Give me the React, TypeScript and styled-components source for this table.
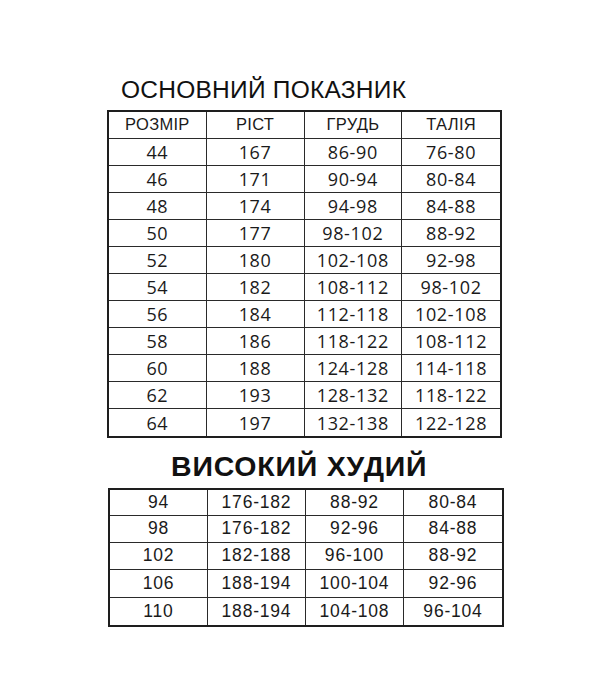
import React from "react";
import styled, { createGlobalStyle } from "styled-components";

const Global = createGlobalStyle`
  html, body { margin: 0; padding: 0; background: #ffffff; }
  body { font-family: "Liberation Sans", Arial, sans-serif; }
`;

const Page = styled.div`
  width: 610px;
  height: 699px;
  box-sizing: border-box;
  padding-top: 78px;
  display: flex;
  flex-direction: column;
  align-items: flex-start;
  background: #fff;
`;

const Title = styled.h1<{ $bold?: boolean; $size: number; $left: number; $top: number; $spacing: number }>`
  margin: ${(p) => p.$top}px 0 0 ${(p) => p.$left}px;
  font-family: "Liberation Sans", Arial, sans-serif;
  font-weight: ${(p) => (p.$bold ? 700 : 400)};
  font-size: ${(p) => p.$size}px;
  line-height: ${(p) => p.$size}px;
  letter-spacing: ${(p) => p.$spacing}px;
  color: #111;
  white-space: nowrap;
`;

const Grid = styled.div<{ $left: number; $top: number; $width: number }>`
  margin: ${(p) => p.$top}px 0 0 ${(p) => p.$left}px;
  width: ${(p) => p.$width}px;
  box-sizing: border-box;
  border: 2px solid #1e1e1e;
  display: grid;
  grid-template-columns: repeat(4, 1fr);
`;

const Cell = styled.div<{ $h: number; $last: boolean; $bottom: boolean; $variant: "head" | "calibri" | "arial" }>`
  height: ${(p) => p.$h}px;
  box-sizing: border-box;
  border-right: ${(p) => (p.$last ? "none" : "1px solid #2a2a2a")};
  border-bottom: ${(p) => (p.$bottom ? "none" : "1px solid #2a2a2a")};
  display: flex;
  align-items: center;
  justify-content: center;
  white-space: nowrap;
  color: #1a1a1a;
  font-family: ${(p) =>
    p.$variant === "calibri" ? '"Open Sans", sans-serif' : '"Liberation Sans", Arial, sans-serif'};
  font-weight: ${(p) => (p.$variant === "calibri" ? 500 : 400)};
  font-size: ${(p) => (p.$variant === "head" ? 16.5 : p.$variant === "calibri" ? 18 : 17.5)}px;
  letter-spacing: ${(p) => (p.$variant === "head" ? 0.3 : p.$variant === "calibri" ? 0.7 : 0.8)}px;
  padding-top: ${(p) => (p.$variant === "calibri" ? 1 : 0)}px;
`;

const main: string[][] = [
  ["44", "167", "86-90", "76-80"],
  ["46", "171", "90-94", "80-84"],
  ["48", "174", "94-98", "84-88"],
  ["50", "177", "98-102", "88-92"],
  ["52", "180", "102-108", "92-98"],
  ["54", "182", "108-112", "98-102"],
  ["56", "184", "112-118", "102-108"],
  ["58", "186", "118-122", "108-112"],
  ["60", "188", "124-128", "114-118"],
  ["62", "193", "128-132", "118-122"],
  ["64", "197", "132-138", "122-128"],
];

const tall: string[][] = [
  ["94", "176-182", "88-92", "80-84"],
  ["98", "176-182", "92-96", "84-88"],
  ["102", "182-188", "96-100", "88-92"],
  ["106", "188-194", "100-104", "92-96"],
  ["110", "188-194", "104-108", "96-104"],
];
const tallHeights = [26, 27, 27, 28, 27];

export default function App() {
  const head = ["РОЗМІР", "РІСТ", "ГРУДЬ", "ТАЛІЯ"];
  return (
    <Page>
      <Global />
      <Title $size={24.5} $left={121} $top={0} $spacing={0.25}>ОСНОВНИЙ ПОКАЗНИК</Title>
      <Grid $left={107} $top={7} $width={395}>
        {head.map((h, i) => (
          <Cell key={"h" + i} $h={27} $last={i === 3} $bottom={false} $variant="head">
            {h}
          </Cell>
        ))}
        {main.map((row, r) =>
          row.map((v, i) => (
            <Cell
              key={r + "-" + i}
              $h={27}
              $last={i === 3}
              $bottom={r === main.length - 1}
              $variant="calibri"
            >
              {v}
            </Cell>
          ))
        )}
      </Grid>
      <Title $bold $size={28.5} $left={171} $top={14} $spacing={0.8}>ВИСОКИЙ ХУДИЙ</Title>
      <Grid $left={108} $top={7.5} $width={396}>
        {tall.map((row, r) =>
          row.map((v, i) => (
            <Cell
              key={r + "-" + i}
              $h={tallHeights[r]}
              $last={i === 3}
              $bottom={r === tall.length - 1}
              $variant="arial"
            >
              {v}
            </Cell>
          ))
        )}
      </Grid>
    </Page>
  );
}
